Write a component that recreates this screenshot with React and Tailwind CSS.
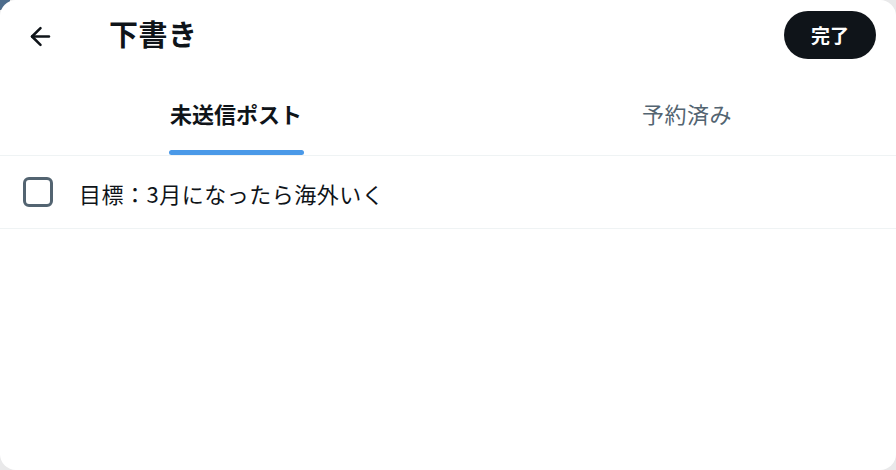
import { ArrowLeft } from 'lucide-react';

const font = { fontFamily: '"Noto Sans CJK JP", "Noto Sans", sans-serif' };

export default function App() {
  return (
    <div className="relative h-[470px] w-[896px] overflow-hidden bg-[#e9e9ea]" style={font}>
      <div className="absolute left-0 top-0 h-[10px] w-[10px] bg-[#4d6c8c]" />
      <div className="relative flex h-full flex-col rounded-2xl bg-white">
        <header className="flex h-[72px] items-center px-[24px]">
          <button className="flex h-[32px] w-[32px] items-center justify-center text-[#0f1419]">
            <ArrowLeft size={29} strokeWidth={2.1} />
          </button>
          <h1 className="ml-[53px] mt-[-4px] text-[29px] font-bold tracking-[0.5px] text-[#0f1419]">下書き</h1>
          <button className="ml-auto mr-[-4px] mt-[-2px] h-[48px] w-[92px] rounded-full bg-[#0f1419] text-[19px] font-bold text-white">
            完了
          </button>
        </header>

        <nav className="grid h-[84px] grid-cols-[472px_1fr] border-b border-[#eff3f4]">
          <div className="flex flex-col items-center justify-end">
            <span className="text-[22px] font-bold leading-none text-[#0f1419]">未送信ポスト</span>
            <span className="mt-[26px] h-[5px] w-[135px] rounded-full bg-[#4a99e8]" />
          </div>
          <div className="flex flex-col items-center justify-end pb-[31px] pl-[6px]">
            <span className="text-[22px] leading-none tracking-[0.5px] text-[#536471]">予約済み</span>
          </div>
        </nav>

        <div className="flex h-[73px] items-center border-b border-[#eff3f4] px-[23px]">
          <span className="h-[30px] w-[30px] rounded-[6px] border-[3px] border-[#536471]" />
          <span className="ml-[26px] mt-[2px] text-[22px] tracking-[0.5px] text-[#0f1419]">目標：3月になったら海外いく</span>
        </div>
      </div>
    </div>
  );
}
